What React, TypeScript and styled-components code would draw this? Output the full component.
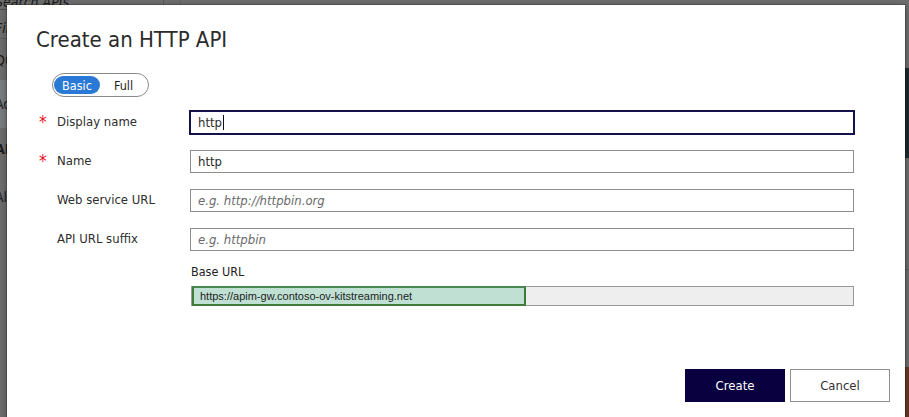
import React from "react";
import styled, { createGlobalStyle } from "styled-components";

const ui = `"DejaVu Sans Condensed", "DejaVu Sans", Tahoma, sans-serif`;

const Global = createGlobalStyle`
  html, body { margin: 0; padding: 0; width: 100%; height: 100%; overflow: hidden; }
  body { background: #6e6e6e; font-family: ${ui}; }
  #root { height: 100%; }
`;

/* ---------- dimmed page behind the dialog ---------- */
const Backdrop = styled.div`
  position: relative;
  width: 909px;
  height: 417px;
  overflow: hidden;
  display: flex;
  background: #6e6e6e;
  font-family: ${ui};
  color: #1c1c1c;
`;

const Sidebar = styled.aside`
  width: 168px;
  margin-left: -5px;
  display: flex;
  flex-direction: column;
  border-right: 1px solid #5a5a5a;
  font-size: 14px;
`;

const SearchBox = styled.div`
  height: 12px;
  margin-top: -5px;
  line-height: 14px;
  font-style: italic;
  border-bottom: 1px solid #4e4e4e;
  padding-bottom: 2px;
`;

const FilterBox = styled.div`
  margin-top: 8px;
  height: 20px;
  line-height: 20px;
  font-style: italic;
  border-bottom: 1px solid #5c5c5c;
`;

const NavItem = styled.div<{ $selected?: boolean; $bold?: boolean; $gap?: number }>`
  height: ${(p) => (p.$selected ? "48px" : "30px")};
  margin-top: ${(p) => p.$gap ?? 6}px;
  display: flex;
  align-items: center;
  background: ${(p) => (p.$selected ? "#7b7e81" : "transparent")};
  font-weight: ${(p) => (p.$bold ? 700 : 400)};
`;

const Main = styled.main`
  flex: 1;
  display: flex;
  justify-content: flex-end;
  border-left: 1px solid #626262;
  margin-left: 16px;
`;

const RightPanel = styled.section`
  width: 190px;
  display: flex;
  flex-direction: column;
  font-size: 13px;
`;

const Banner = styled.div`
  margin-top: 68px;
  height: 90px;
  background: #1c2a2e;
`;

const PanelHeading = styled.div`
  margin-top: 10px;
  font-size: 16px;
  padding-left: 4px;
`;

const PanelText = styled.div`
  padding-left: 4px;
  line-height: 17px;
`;

const PanelRule = styled.div`
  margin-top: 48px;
  border-top: 1px solid #5e5e5e;
`;

const PanelFooter = styled.div`
  margin-top: auto;
  height: 50px;
  background: #6a3a25;
`;

/* ---------- dialog ---------- */
const Dialog = styled.div`
  position: absolute;
  left: 7px;
  top: 5px;
  width: 898px;
  height: 440px;
  box-sizing: border-box;
  background: #ffffff;
  box-shadow: 0 0 0 1px rgba(0, 0, 0, 0.2), 0 2px 8px rgba(0, 0, 0, 0.35);
  padding: 21px 15px 0 29px;
  display: flex;
  flex-direction: column;
  font-family: ${ui};
  color: #333;
`;

const Title = styled.h1`
  margin: 0;
  font-size: 22px;
  line-height: 28px;
  font-weight: 400;
  color: #2b2b2b;
`;

const Toggle = styled.div`
  margin: 19px 0 0 16px;
  width: 97px;
  height: 24px;
  box-sizing: border-box;
  border: 1px solid #8a8a8a;
  border-radius: 12px;
  padding: 2px 1px;
  display: flex;
  align-items: center;
`;

const ToggleOption = styled.div<{ $active?: boolean }>`
  width: ${(p) => (p.$active ? "46px" : "47px")};
  height: 18px;
  border-radius: 9px;
  display: flex;
  align-items: center;
  justify-content: center;
  font-size: 12.5px;
  background: ${(p) => (p.$active ? "#2a7ad5" : "transparent")};
  color: ${(p) => (p.$active ? "#ffffff" : "#222")};
`;

const Form = styled.div`
  margin-top: 14px;
  padding: 0 36px 0 3px;
  display: grid;
  grid-template-columns: 18px 133px 1fr;
  grid-auto-rows: 23px;
  row-gap: 16px;
  align-items: center;
`;

const Required = styled.span`
  color: #e8111c;
  font-size: 17px;
  line-height: 17px;
  align-self: start;
  margin-top: 3px;
`;

const Label = styled.label`
  grid-column: 2;
  font-size: 13px;
  color: #2e2e2e;
  margin-top: -2px;
`;

const Field = styled.div<{ $focused?: boolean }>`
  grid-column: 3;
  height: 23px;
  box-sizing: border-box;
  border: 1px solid ${(p) => (p.$focused ? "#14124a" : "#8e8e8e")};
  box-shadow: ${(p) => (p.$focused ? "0 0 0 1px #14124a" : "none")};
  display: flex;
  align-items: center;
  padding-left: 7px;
  font-size: 13px;
  color: #2a2a2a;
`;

const Placeholder = styled.span`
  font-style: italic;
  color: #6a6a6a;
`;

const Caret = styled.span`
  display: inline-block;
  width: 1px;
  height: 15px;
  background: #111;
  margin-left: 1px;
`;

const BaseSection = styled.div`
  margin: 13px 36px 0 155px;
  display: flex;
  flex-direction: column;
`;

const BaseLabel = styled.div`
  font-size: 12.5px;
  line-height: 16px;
  color: #222;
`;

const BaseField = styled.div`
  margin-top: 6px;
  height: 20px;
  box-sizing: border-box;
  border: 1px solid #9a9a9a;
  background: #eeeeee;
  display: flex;
`;

const BaseValue = styled.div`
  width: 334px;
  margin: -1px 0 -1px 0;
  box-sizing: border-box;
  border: 2px solid #3f7b39;
  border-top-color: #4a8a52;
  background: #bfe0d3;
  display: flex;
  align-items: center;
  padding-left: 6px;
  font-family: "Liberation Sans", Arial, sans-serif;
  font-size: 11px;
  color: #1e1e1e;
`;

const Footer = styled.div`
  margin-top: 63px;
  display: flex;
  justify-content: flex-end;
  gap: 5px;
`;

const Button = styled.button<{ $primary?: boolean }>`
  width: 100px;
  height: 33px;
  box-sizing: border-box;
  font-family: ${ui};
  font-size: 13px;
  cursor: pointer;
  border: 1px solid ${(p) => (p.$primary ? "#09003f" : "#8f8f8f")};
  background: ${(p) => (p.$primary ? "#09003f" : "#ffffff")};
  color: ${(p) => (p.$primary ? "#ffffff" : "#333")};
`;

type Row = { label: string; required?: boolean; value?: string; placeholder?: string; focused?: boolean };

const rows: Row[] = [
  { label: "Display name", required: true, value: "http", focused: true },
  { label: "Name", required: true, value: "http" },
  { label: "Web service URL", placeholder: "e.g. http://httpbin.org" },
  { label: "API URL suffix", placeholder: "e.g. httpbin" },
];

export default function App() {
  return (
    <>
      <Global />
      <Backdrop>
        <Sidebar>
          <SearchBox>Search APIs</SearchBox>
          <FilterBox>Filter by tags</FilterBox>
          <NavItem>Quick start</NavItem>
          <NavItem $selected $gap={5}>Add API</NavItem>
          <NavItem $bold>APIs</NavItem>
          <NavItem $gap={18}>All APIs</NavItem>
        </Sidebar>
        <Main>
          <RightPanel>
            <Banner />
            <PanelHeading>Recent</PanelHeading>
            <PanelText>gateway</PanelText>
            <PanelText>overview</PanelText>
            <PanelRule />
            <PanelFooter />
          </RightPanel>
        </Main>
        <Dialog role="dialog" aria-label="Create an HTTP API">
          <Title>Create an HTTP API</Title>
          <Toggle>
            <ToggleOption $active>Basic</ToggleOption>
            <ToggleOption>Full</ToggleOption>
          </Toggle>
          <Form>
            {rows.map((r) => (
              <React.Fragment key={r.label}>
                {r.required ? <Required>*</Required> : <span />}
                <Label>{r.label}</Label>
                <Field $focused={r.focused}>
                  {r.value ? r.value : <Placeholder>{r.placeholder}</Placeholder>}
                  {r.focused && <Caret />}
                </Field>
              </React.Fragment>
            ))}
          </Form>
          <BaseSection>
            <BaseLabel>Base URL</BaseLabel>
            <BaseField>
              <BaseValue>https://apim-gw.contoso-ov-kitstreaming.net</BaseValue>
            </BaseField>
          </BaseSection>
          <Footer>
            <Button $primary>Create</Button>
            <Button>Cancel</Button>
          </Footer>
        </Dialog>
      </Backdrop>
    </>
  );
}
